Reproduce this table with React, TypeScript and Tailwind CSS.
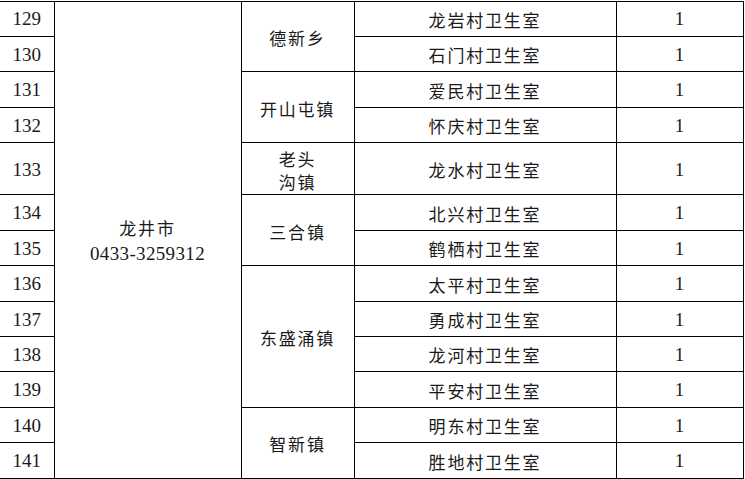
import React from 'react';

type Row = { no: number; clinic: string };
type Town = { name: React.ReactNode; rows: Row[]; tall?: boolean };

const towns: Town[] = [
  { name: '德新乡', rows: [{ no: 129, clinic: '龙岩村卫生室' }, { no: 130, clinic: '石门村卫生室' }] },
  { name: '开山屯镇', rows: [{ no: 131, clinic: '爱民村卫生室' }, { no: 132, clinic: '怀庆村卫生室' }] },
  {
    name: (
      <>
        老头
        <br />
        沟镇
      </>
    ),
    rows: [{ no: 133, clinic: '龙水村卫生室' }],
    tall: true,
  },
  { name: '三合镇', rows: [{ no: 134, clinic: '北兴村卫生室' }, { no: 135, clinic: '鹤栖村卫生室' }] },
  {
    name: '东盛涌镇',
    rows: [
      { no: 136, clinic: '太平村卫生室' },
      { no: 137, clinic: '勇成村卫生室' },
      { no: 138, clinic: '龙河村卫生室' },
      { no: 139, clinic: '平安村卫生室' },
    ],
  },
  { name: '智新镇', rows: [{ no: 140, clinic: '明东村卫生室' }, { no: 141, clinic: '胜地村卫生室' }] },
];

const cjk = "font-['Noto_Sans_CJK_SC',sans-serif] text-[17px] tracking-[1.8px] text-[#1a1a1a]";
const num = "font-['Liberation_Serif',serif] text-[19px] text-[#1a1a1a]";
const cell = 'border border-black p-0 pt-[2px] text-center align-middle';

export default function App() {
  const total = towns.reduce((n, t) => n + t.rows.length, 0);
  let first = true;

  return (
    <div className="w-[745px] h-[479px] overflow-hidden bg-white">
      <table className="table-fixed border-collapse w-[743px] mt-[0.5px]">
        <colgroup>
          <col className="w-[54px]" />
          <col className="w-[187px]" />
          <col className="w-[113px]" />
          <col className="w-[262px]" />
          <col className="w-[127px]" />
        </colgroup>
        <tbody>
          {towns.map((town) =>
            town.rows.map((row, i) => {
              const showCity = first;
              first = false;
              return (
                <tr key={row.no} className={town.tall ? 'h-[52px]' : 'h-[35.45px]'}>
                  <td className={`${cell} border-l-0 ${num}`}>{row.no}</td>
                  {showCity && (
                    <td rowSpan={total} className={cell}>
                      <div className={`${cjk} leading-[26px]`}>龙井市</div>
                      <div className="font-['Liberation_Serif',serif] text-[19px] tracking-[0.35px] leading-[26px] text-[#1a1a1a]">
                        0433-3259312
                      </div>
                    </td>
                  )}
                  {i === 0 && (
                    <td rowSpan={town.rows.length} className={`${cell} ${cjk} leading-[23px]`}>
                      {town.name}
                    </td>
                  )}
                  <td className={`${cell} ${cjk}`}>{row.clinic}</td>
                  <td className={`${cell} ${num}`}>1</td>
                </tr>
              );
            })
          )}
        </tbody>
      </table>
    </div>
  );
}
